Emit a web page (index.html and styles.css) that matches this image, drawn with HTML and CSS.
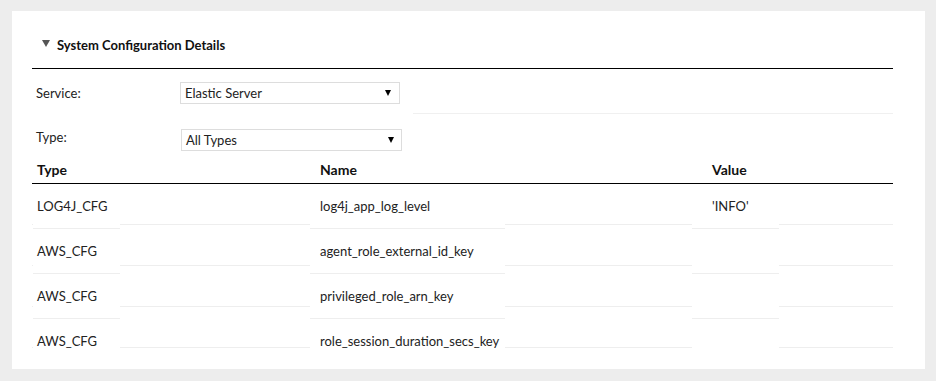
FILE: index.html
```
<!DOCTYPE html>
<html>
<head>
<meta charset="utf-8">
<link rel="stylesheet" href="styles.css">
</head>
<body>
<div class="card">
  <div class="section-title">
    <svg class="caret" width="8" height="7" viewBox="0 0 8 7"><polygon points="0,0 8,0 4,7" fill="#555"/></svg>
    <span>System Configuration Details</span>
  </div>
  <div class="field-row first">
    <div class="field">
      <label class="field-label">Service:</label>
      <div class="select s1"><span>Elastic Server</span><i class="arrow"></i></div>
    </div>
  </div>
  <div class="field-row second">
    <div class="field">
      <label class="field-label">Type:</label>
      <div class="select s2"><span>All Types</span><i class="arrow"></i></div>
    </div>
  </div>
  <div class="thead">
    <div class="th c1">Type</div>
    <div class="th c2">Name</div>
    <div class="th c3">Value</div>
  </div>
  <div class="tbody">
    <div class="tr">
      <div class="td c1"><div class="cell">LOG4J_CFG</div></div>
      <div class="td c2"><div class="cell">log4j_app_log_level</div></div>
      <div class="td c3"><div class="cell">'INFO'</div></div>
    </div>
    <div class="tr">
      <div class="td c1"><div class="cell">AWS_CFG</div></div>
      <div class="td c2"><div class="cell">agent_role_external_id_key</div></div>
      <div class="td c3"><div class="cell"></div></div>
    </div>
    <div class="tr">
      <div class="td c1"><div class="cell">AWS_CFG</div></div>
      <div class="td c2"><div class="cell">privileged_role_arn_key</div></div>
      <div class="td c3"><div class="cell"></div></div>
    </div>
    <div class="tr">
      <div class="td c1"><div class="cell">AWS_CFG</div></div>
      <div class="td c2"><div class="cell">role_session_duration_secs_key</div></div>
      <div class="td c3"><div class="cell"></div></div>
    </div>
  </div>
</div>
</body>
</html>
```
FILE: styles.css
```
html, body {
  margin: 0;
  padding: 0;
}
body {
  background: #ededed;
  padding: 11px 11px 12px 12px;
  font-family: Lato, "Liberation Sans", sans-serif;
  font-size: 13px;
  color: #222;
}
.card {
  background: #fff;
  height: 358px;
  box-sizing: border-box;
  padding: 0 32px 0 20px;
  overflow: hidden;
}
.section-title {
  border-bottom: 1px solid #000;
  display: flex;
  align-items: center;
  padding-left: 10px;
  padding-top: 10px;
  box-sizing: border-box;
  height: 58px;
  font-weight: 700;
  font-size: 13px;
  color: #111;
}
.caret {
  margin-right: 7px;
  margin-top: -2px;
}
.field-row {
  display: flex;
  align-items: flex-start;
}
.field-row.first {
  height: 44px;
  border-bottom: 1px solid #f0f0f0;
}
.field-row.second {
  height: 46px;
}
.field {
  width: 381px;
  height: 48px;
  background: #fff;
  display: flex;
  align-items: center;
  box-sizing: border-box;
}
.first .field {
  border-bottom: 1px solid #f0f0f0;
}
.second .field {
  align-items: flex-start;
  padding-top: 15px;
}
.field-label {
  width: 148px;
  padding-left: 4px;
  box-sizing: border-box;
}
.select {
  height: 22px;
  border: 1px solid #ddd;
  box-sizing: border-box;
  display: flex;
  align-items: center;
  justify-content: space-between;
  padding: 0 8px 0 4px;
}
.select.s1 { width: 220px; }
.select.s2 { width: 221px; margin-left: 1px; padding-right: 7px; }
.arrow {
  width: 0;
  height: 0;
  border-left: 3px solid transparent;
  border-right: 3px solid transparent;
  border-top: 6px solid #000;
}
.thead {
  display: grid;
  grid-template-columns: 278px 382px 201px;
  height: 23px;
  border-bottom: 1px solid #000;
  font-weight: 700;
  font-size: 14px;
  align-items: start;
  color: #111;
}
.th { padding-top: 1px; }
.th.c1 { padding-left: 5px; }
.th.c2 { padding-left: 10px; }
.th.c3 { padding-left: 20px; }
.tbody {
  height: 178px;
  overflow: hidden;
  background: repeating-linear-gradient(to bottom, transparent 0, transparent 40px, #eeeeee 40px, #eeeeee 41px);
}
.tr {
  display: grid;
  grid-template-columns: 278px 382px 201px;
}
.cell {
  background: #fff;
  height: 45px;
  box-sizing: border-box;
  border-bottom: 1px solid #eeeeee;
  display: flex;
  align-items: center;
}
.c1 .cell { width: 87px; margin-left: 1px; padding-left: 4px; }
.c2 .cell { width: 195px; padding-left: 10px; }
.c3 .cell { width: 87px; padding-left: 20px; }
```
